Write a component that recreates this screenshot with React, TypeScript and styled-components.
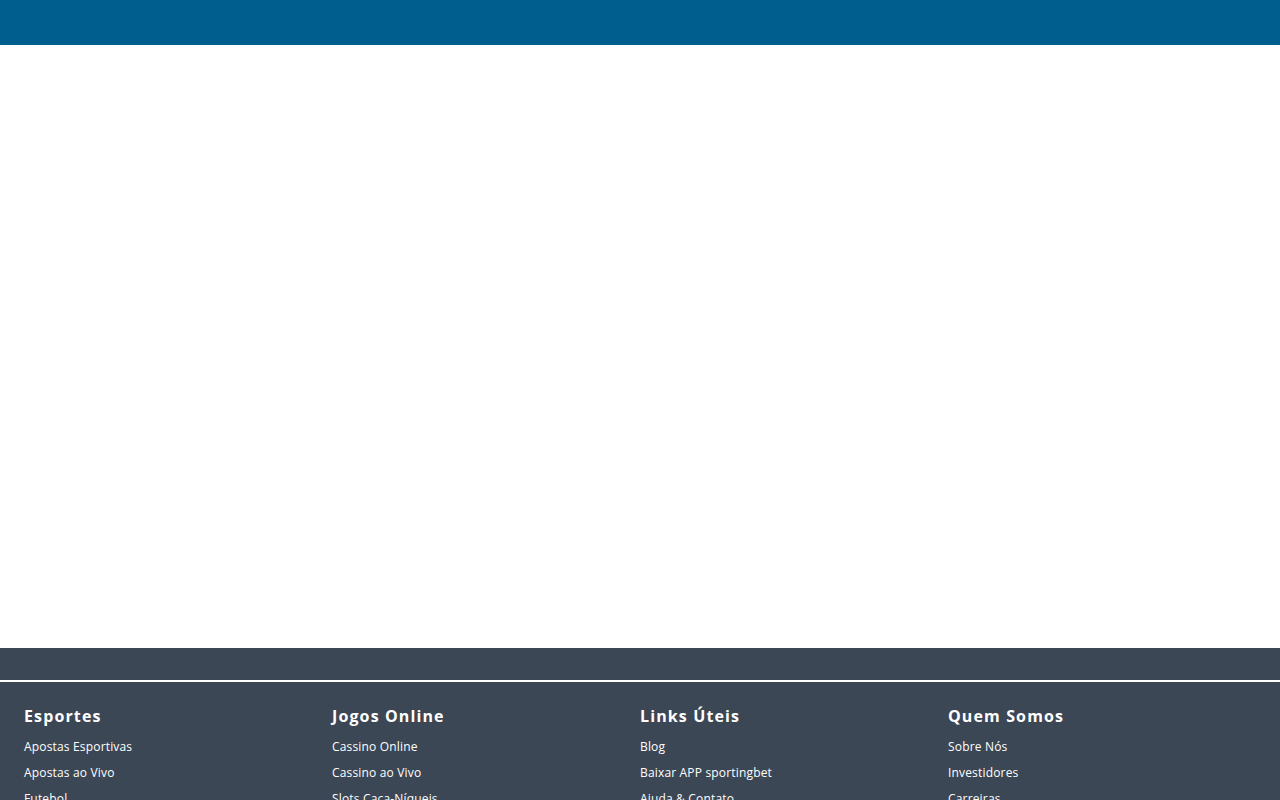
import React from "react";
import styled, { createGlobalStyle } from "styled-components";

const Global = createGlobalStyle`
  html, body { margin: 0; padding: 0; height: 800px; overflow: hidden; background: #fff; }
  * { box-sizing: border-box; }
`;
const Page = styled.div`
  height: 800px; overflow: hidden; display: flex; flex-direction: column;
  font-family: "Open Sans", sans-serif;
`;
const TopBar = styled.header`
  height: 45px; flex: none;
  background: #005e8f;
`;
const Main = styled.main`
  height: 603px; flex: none; background: #fff;
`;
const Footer = styled.footer`
  flex: none; background: #3c4755; padding-top: 32px;
`;
const Columns = styled.div`
  border-top: 2px solid #fff;
  display: grid; grid-template-columns: repeat(4, 308px);
  padding: 24px 0 0 24px;
`;
const Title = styled.h3`
  margin: 0 0 8px; font-size: 16px; line-height: 20px; font-weight: 700;
  letter-spacing: 1.12px; color: #fff;
`;
const LinkItem = styled.a`
  display: block; font-size: 12px; line-height: 26px; color: #fff;
  letter-spacing: 0.17px;
`;
const cols: [string, string[]][] = [
  ["Esportes", ["Apostas Esportivas", "Apostas ao Vivo", "Futebol"]],
  ["Jogos Online", ["Cassino Online", "Cassino ao Vivo", "Slots Caça-Níqueis"]],
  ["Links Úteis", ["Blog", "Baixar APP sportingbet", "Ajuda & Contato"]],
  ["Quem Somos", ["Sobre Nós", "Investidores", "Carreiras"]],
];
export default function App() {
  return (
    <Page>
      <Global />
      <TopBar />
      <Main />
      <Footer>
        <Columns>
          {cols.map(([t, links]) => (
            <div key={t}>
              <Title>{t}</Title>
              {links.map((l) => <LinkItem key={l}>{l}</LinkItem>)}
            </div>
          ))}
        </Columns>
      </Footer>
    </Page>
  );
}
